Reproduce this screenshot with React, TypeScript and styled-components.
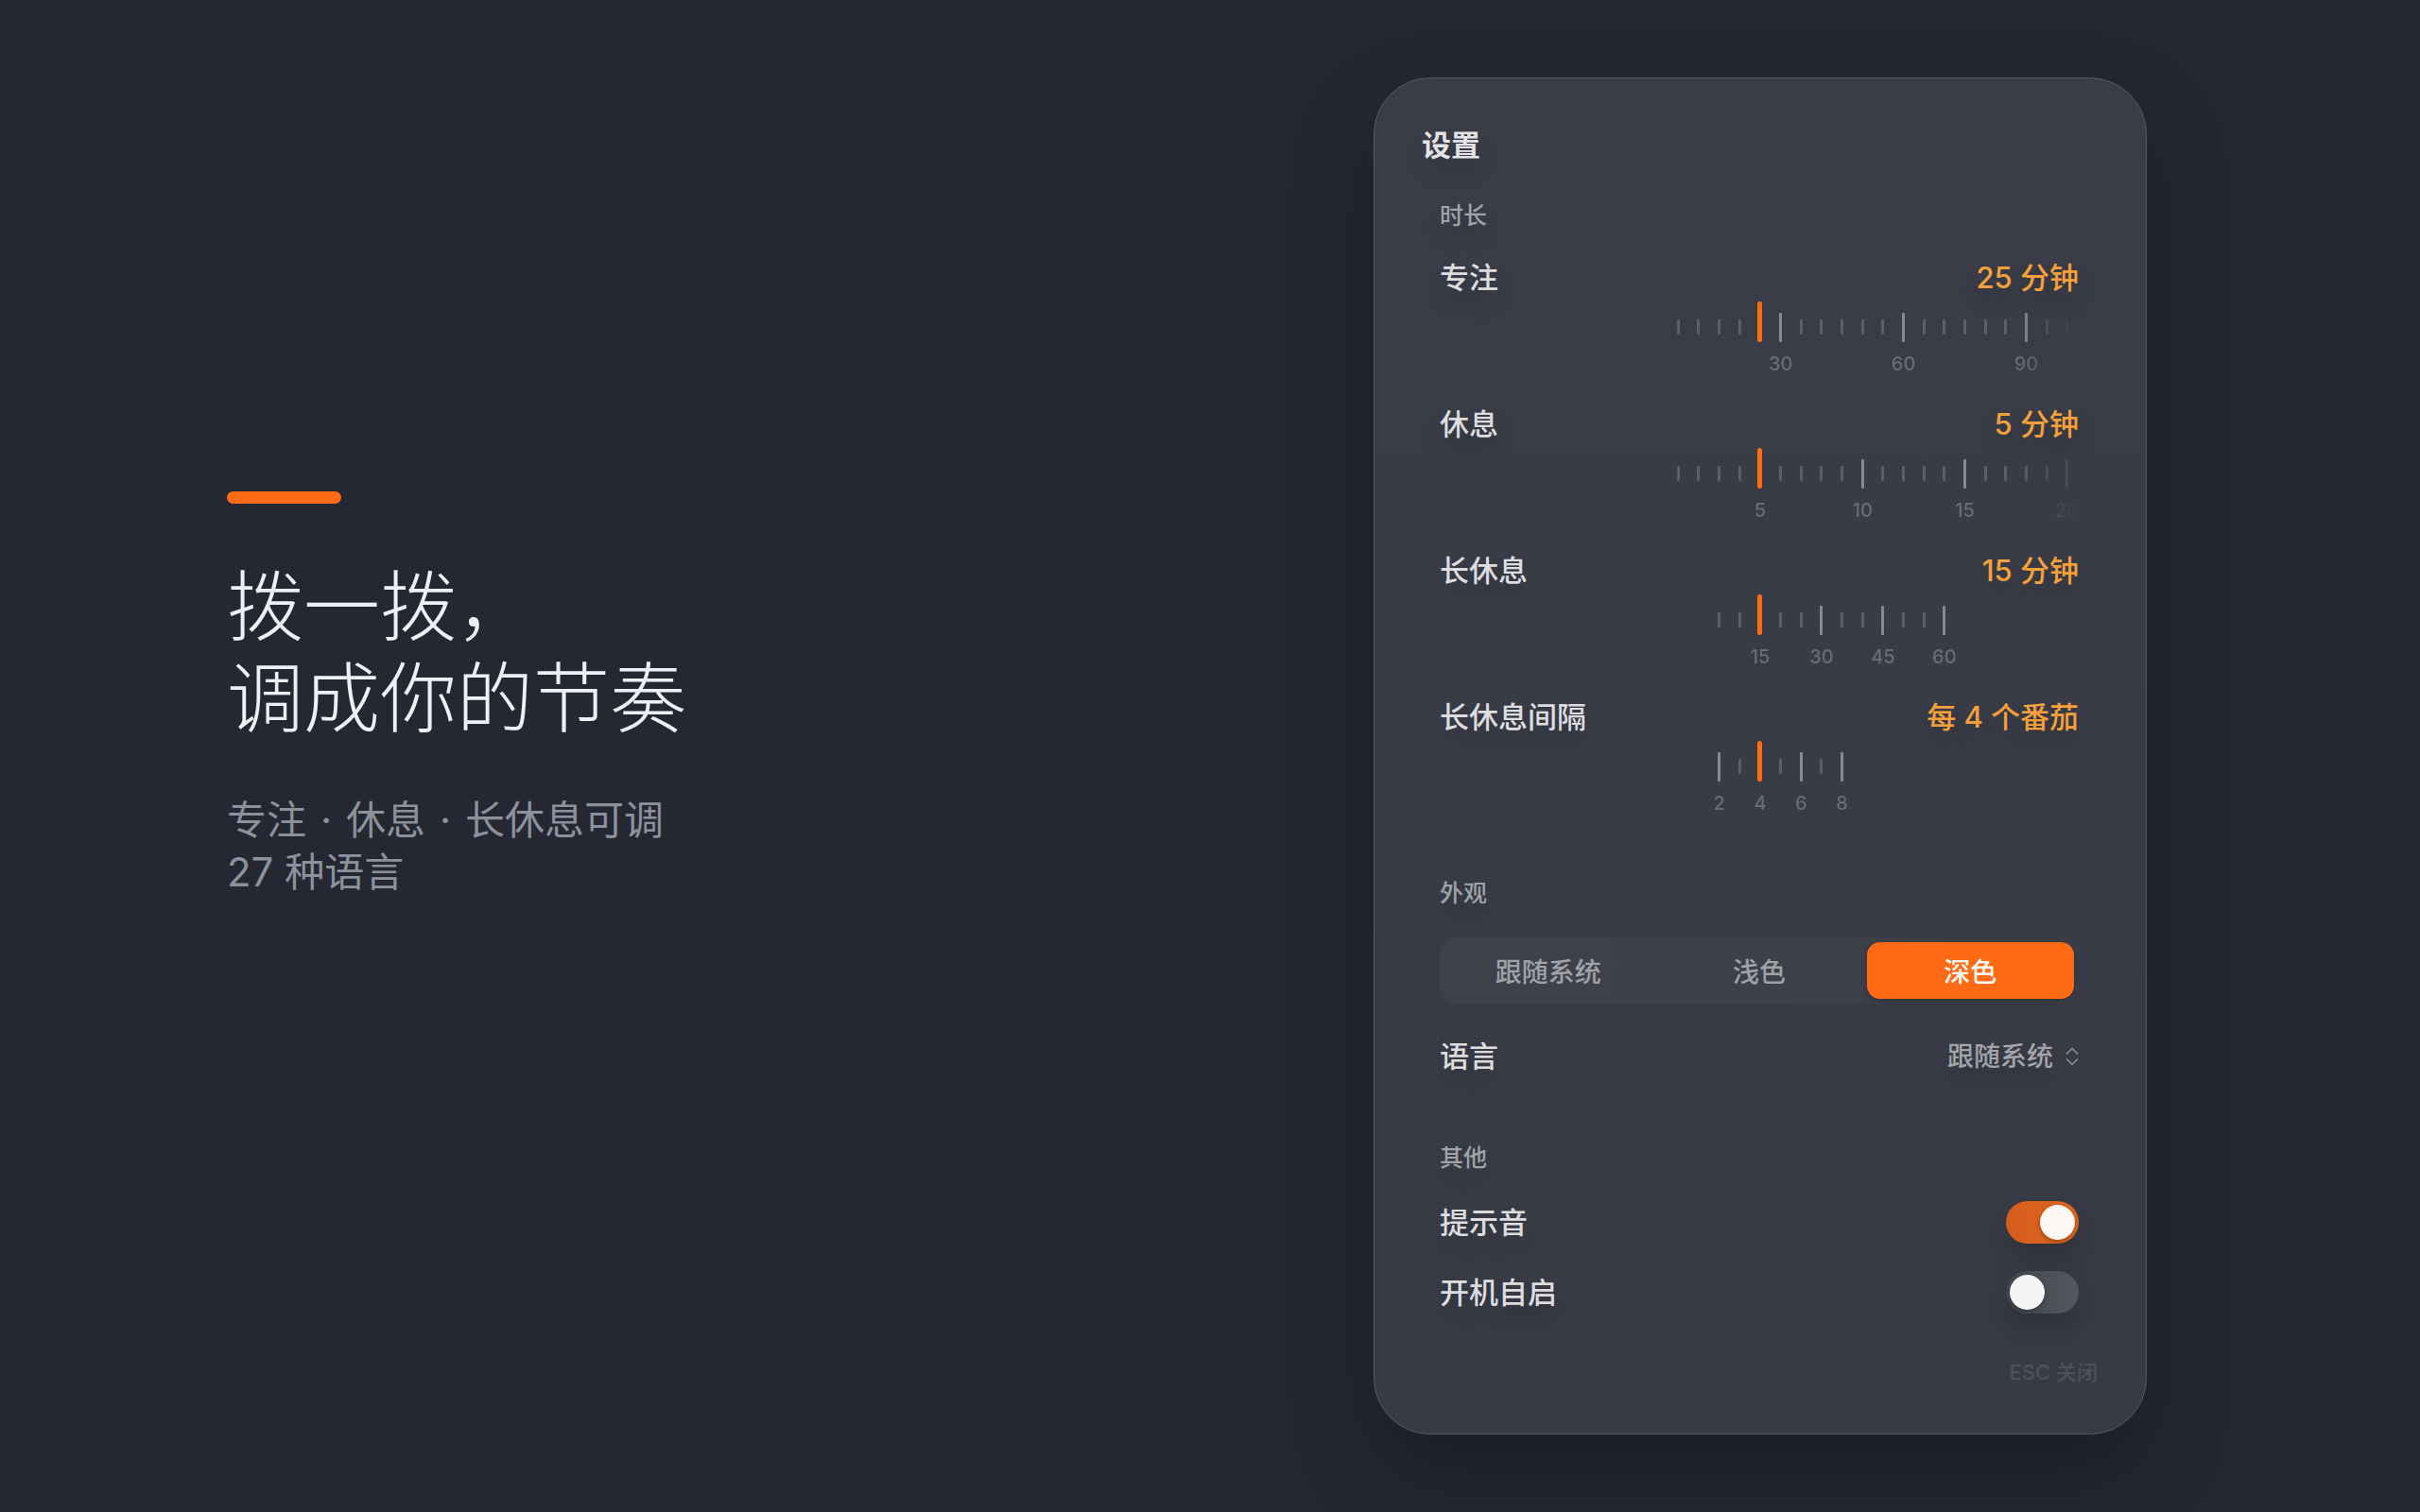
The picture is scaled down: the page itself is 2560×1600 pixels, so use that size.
import React from "react"
import styled, { createGlobalStyle } from "styled-components"

const GlobalStyle = createGlobalStyle`
  html, body {
    margin: 0;
    padding: 0;
    background: #252833;
  }
  body {
    font-family: Inter, "Noto Sans CJK SC", sans-serif;
    -webkit-font-smoothing: antialiased;
  }
`

const Page = styled.div`
  width: 2560px;
  height: 1600px;
  box-sizing: border-box;
  display: flex;
  align-items: flex-start;
  padding: 82px 289px 82px 240px;
  background: #252833;
`

const Intro = styled.div`
  flex: 1;
  margin-top: 438px;
  display: flex;
  flex-direction: column;
`

const Accent = styled.div`
  width: 121px;
  height: 13px;
  border-radius: 7px;
  background: #ff6a14;
`

const Headline = styled.h1`
  margin: 61px 0 0;
  font-size: 81px;
  line-height: 97px;
  font-weight: 300;
  color: #eef0f5;
`

const Tagline = styled.p`
  margin: 52px 0 0;
  font-size: 42px;
  line-height: 55px;
  font-weight: 400;
  color: #8c919c;
`

const Dot = styled.span`
  display: inline-block;
  width: 1em;
  text-align: center;
`

const Panel = styled.section`
  flex: none;
  width: 818px;
  height: 1436px;
  box-sizing: border-box;
  display: flex;
  flex-direction: column;
  padding: 55px 71px 52px 69px;
  border-radius: 60px;
  border: 1px solid #565963;
  background: linear-gradient(180deg, #3a3d47 0%, #383b45 100%);
  box-shadow: 0 40px 90px rgba(0, 0, 0, 0.28);
  text-shadow: 0 14px 22px rgba(0, 0, 0, 0.16);
`

const Title = styled.h2`
  margin: 0 0 0 -19px;
  font-size: 31px;
  line-height: 31px;
  font-weight: 600;
  color: #e3e3e6;
`

const Section = styled.div<{ $top: number; $gap: number }>`
  display: flex;
  flex-direction: column;
  margin-top: ${(p) => p.$top}px;
  gap: ${(p) => p.$gap}px;
`

const SectionLabel = styled.div<{ $space?: number }>`
  margin-bottom: ${(p) => p.$space ?? 0}px;
  font-size: 25px;
  line-height: 24px;
  font-weight: 500;
  color: #a0a3a9;
`

const RowHead = styled.div<{ $h?: number; $top?: number }>`
  display: flex;
  align-items: center;
  justify-content: space-between;
  height: ${(p) => p.$h ?? 30}px;
  margin-top: ${(p) => p.$top ?? 0}px;
`

const RowLabel = styled.div`
  font-size: 31px;
  line-height: 30px;
  font-weight: 500;
  color: #dddde0;
`

const RowValue = styled.div`
  font-size: 31px;
  line-height: 30px;
  font-weight: 500;
  color: #f6a03c;
`

const RulerBlock = styled.div`
  display: flex;
  flex-direction: column;
`

const RulerViewport = styled.div`
  margin-top: 10px;
  overflow: hidden;
  -webkit-mask-image: linear-gradient(90deg, #000 0, #000 calc(100% - 64px), transparent 100%);
  mask-image: linear-gradient(90deg, #000 0, #000 calc(100% - 64px), transparent 100%);
`

const RulerTrack = styled.div`
  display: flex;
  width: max-content;
`

const TickCol = styled.div`
  flex: none;
  width: 21.667px;
  display: flex;
  flex-direction: column;
  align-items: center;
`

const TickArea = styled.div`
  height: 43px;
  display: flex;
  align-items: flex-end;
`

type TickKind = "active" | "major" | "minor"

const TickLine = styled.div<{ $kind: TickKind }>`
  width: ${(p) => (p.$kind === "active" ? 5 : 3)}px;
  height: ${(p) => (p.$kind === "active" ? 43 : p.$kind === "major" ? 31 : 16)}px;
  margin-bottom: ${(p) => (p.$kind === "minor" ? 8 : 0)}px;
  border-radius: ${(p) => (p.$kind === "active" ? 3 : 1)}px;
  background: ${(p) => (p.$kind === "active" ? "#ff6a13" : p.$kind === "major" ? "#878a92" : "#5c5f68")};
`

const TickLabel = styled.div`
  flex: none;
  width: 60px;
  margin: 11px -19.17px 0;
  height: 24px;
  font-size: 20px;
  line-height: 24px;
  font-weight: 500;
  text-align: center;
  color: #696c75;
  white-space: nowrap;
  text-shadow: none;
`

const Segmented = styled.div`
  display: grid;
  grid-template-columns: repeat(3, 1fr);
  gap: 4px;
  height: 70px;
  box-sizing: border-box;
  padding: 5px;
  border-radius: 18px;
  background: linear-gradient(90deg, #3f424b 0%, #3c3f48 100%);
`

const Segment = styled.div<{ $active?: boolean }>`
  display: flex;
  align-items: center;
  justify-content: center;
  border-radius: 14px;
  font-size: 28px;
  font-weight: 500;
  color: ${(p) => (p.$active ? "#ffffff" : "#9fa2a9")};
  background: ${(p) => (p.$active ? "#ff6b15" : "transparent")};
  box-shadow: ${(p) => (p.$active ? "0 2px 6px rgba(0, 0, 0, 0.25)" : "none")};
  text-shadow: none;
`

const SelectValue = styled.div`
  display: flex;
  align-items: center;
  gap: 13px;
  font-size: 28px;
  line-height: 28px;
  font-weight: 500;
  color: #a3a5ab;
`

const Switch = styled.div<{ $on?: boolean }>`
  width: 77px;
  height: 45px;
  box-sizing: border-box;
  padding: 4px;
  border-radius: 23px;
  display: flex;
  align-items: center;
  justify-content: ${(p) => (p.$on ? "flex-end" : "flex-start")};
  background: ${(p) =>
    p.$on ? "linear-gradient(90deg, #d55d1c 0%, #e0661f 100%)" : "linear-gradient(90deg, #44464e 0%, #55575f 100%)"};
  box-shadow: 0 14px 30px rgba(0, 0, 0, 0.18);
`

const Knob = styled.div<{ $on?: boolean }>`
  width: 37px;
  height: 37px;
  border-radius: 50%;
  background: ${(p) => (p.$on ? "#fcf7f3" : "#f5f5f5")};
  box-shadow: 0 2px 5px rgba(0, 0, 0, 0.3);
`

const Footer = styled.div`
  margin: auto -20px 0 0;
  align-self: flex-end;
  font-size: 22px;
  line-height: 26px;
  font-weight: 500;
  color: #4e515a;
  text-shadow: none;
`

const STEP_W = 21.667
const POINTER = 328.17

type RulerProps = { min: number; max: number; step: number; value: number; major: number }

function Ruler({ min, max, step, value, major }: RulerProps) {
  const values: number[] = []
  for (let v = min; v <= max; v += step) values.push(v)
  const idx = values.indexOf(value)
  return (
    <RulerViewport>
      <RulerTrack style={{ marginLeft: POINTER - idx * STEP_W }}>
        {values.map((v) => {
          const kind: TickKind = v === value ? "active" : v % major === 0 ? "major" : "minor"
          return (
            <TickCol key={v}>
              <TickArea>
                <TickLine $kind={kind} />
              </TickArea>
              <TickLabel>{v % major === 0 ? v : ""}</TickLabel>
            </TickCol>
          )
        })}
      </RulerTrack>
    </RulerViewport>
  )
}

const durations = [
  { label: "专注", text: "25 分钟", min: 5, max: 100, step: 5, value: 25, major: 30 },
  { label: "休息", text: "5 分钟", min: 1, max: 20, step: 1, value: 5, major: 5 },
  { label: "长休息", text: "15 分钟", min: 5, max: 60, step: 5, value: 15, major: 15 },
  { label: "长休息间隔", text: "每 4 个番茄", min: 2, max: 8, step: 1, value: 4, major: 2 },
]

const themes = ["跟随系统", "浅色", "深色"]

function UpDown() {
  return (
    <svg width="14" height="20" viewBox="0 0 14 20" fill="none">
      <path d="M1.5 7 L7 1.5 L12.5 7" stroke="#8e9198" strokeWidth="1.6" strokeLinecap="round" strokeLinejoin="round" />
      <path d="M1.5 13 L7 18.5 L12.5 13" stroke="#8e9198" strokeWidth="1.6" strokeLinecap="round" strokeLinejoin="round" />
    </svg>
  )
}

export default function App() {
  return (
    <>
      <GlobalStyle />
      <Page>
        <Intro>
          <Accent />
          <Headline>
            拨一拨，
            <br />
            调成你的节奏
          </Headline>
          <Tagline>
            专注<Dot>·</Dot>休息<Dot>·</Dot>长休息可调
            <br />
            27 种语言
          </Tagline>
        </Intro>

        <Panel>
          <Title>设置</Title>

          <Section $top={47} $gap={37}>
            <SectionLabel $space={2}>时长</SectionLabel>
            {durations.map((d) => (
              <RulerBlock key={d.label}>
                <RowHead>
                  <RowLabel>{d.label}</RowLabel>
                  <RowValue>{d.text}</RowValue>
                </RowHead>
                <Ruler min={d.min} max={d.max} step={d.step} value={d.value} major={d.major} />
              </RulerBlock>
            ))}
          </Section>

          <Section $top={71} $gap={35}>
            <SectionLabel>外观</SectionLabel>
            <Segmented>
              {themes.map((t) => (
                <Segment key={t} $active={t === "深色"}>
                  {t}
                </Segment>
              ))}
            </Segmented>
            <RowHead $top={6}>
              <RowLabel>语言</RowLabel>
              <SelectValue>
                跟随系统
                <UpDown />
              </SelectValue>
            </RowHead>
          </Section>

          <Section $top={80} $gap={29}>
            <SectionLabel>其他</SectionLabel>
            <RowHead $h={45} $top={5}>
              <RowLabel>提示音</RowLabel>
              <Switch $on>
                <Knob $on />
              </Switch>
            </RowHead>
            <RowHead $h={45}>
              <RowLabel>开机自启</RowLabel>
              <Switch>
                <Knob />
              </Switch>
            </RowHead>
          </Section>

          <Footer>ESC 关闭</Footer>
        </Panel>
      </Page>
    </>
  )
}
